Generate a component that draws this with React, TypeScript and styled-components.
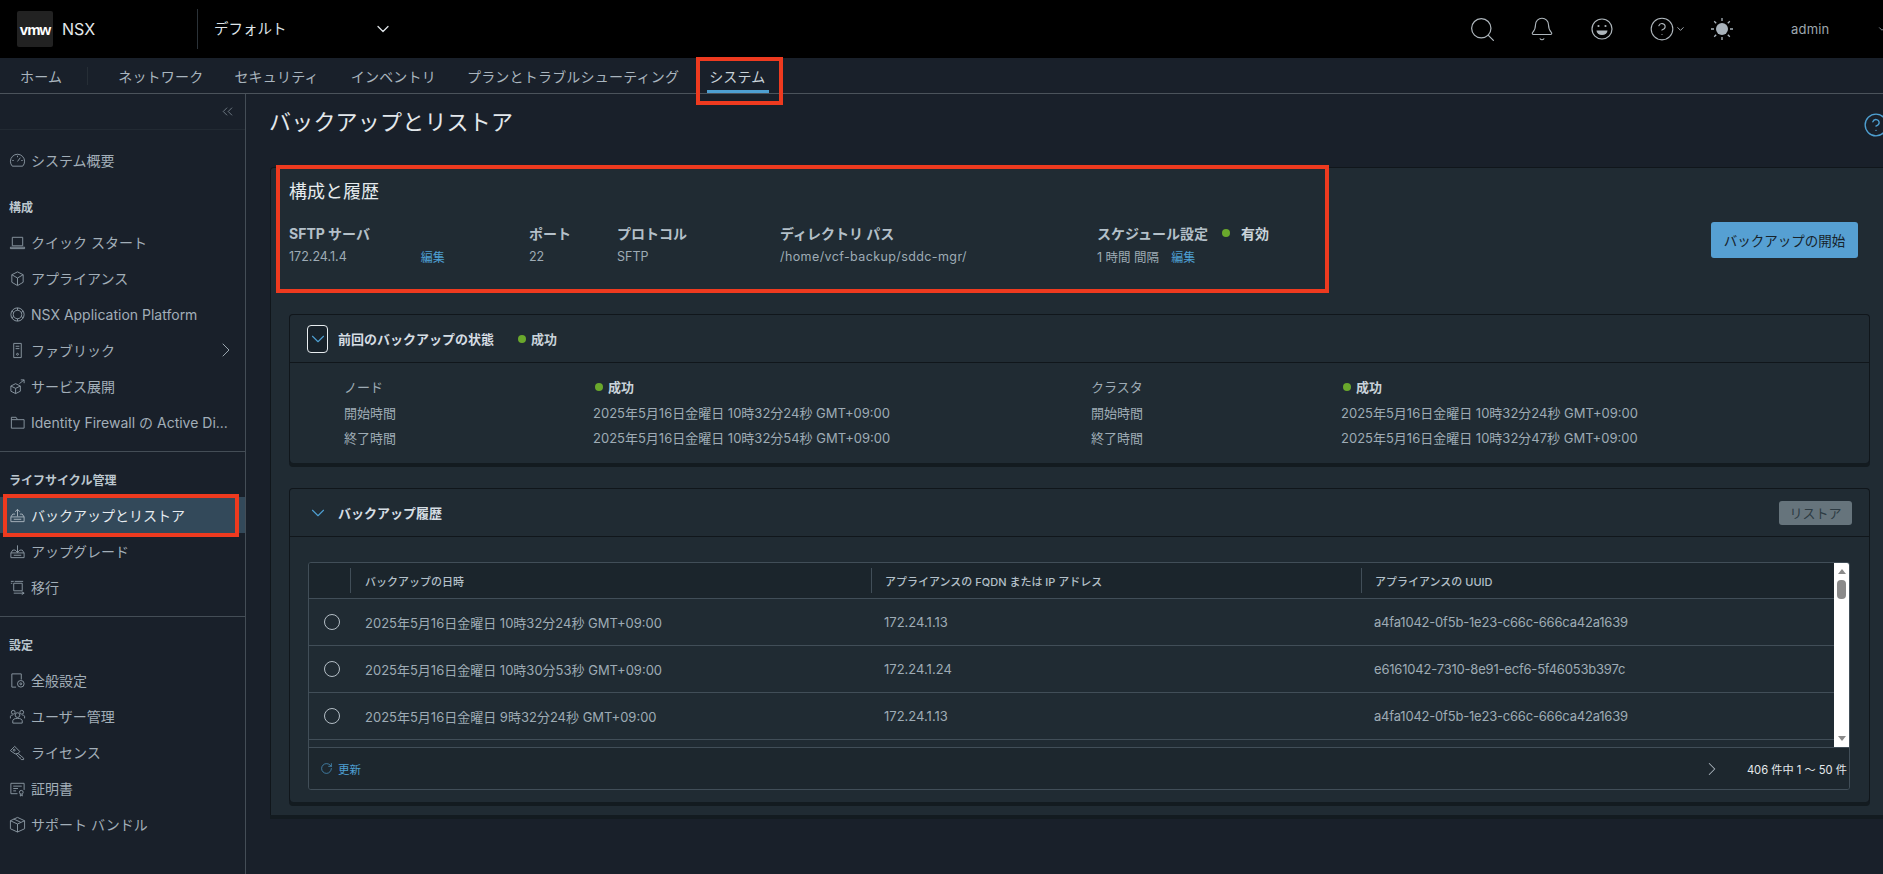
import React from 'react';
import styled, { createGlobalStyle } from 'styled-components';
import { Bell, ChevronDown, ChevronRight, ChevronsLeft, CircleHelp, RotateCw, Search } from 'lucide-react';

const GlobalStyle = createGlobalStyle`
  html, body {
    margin: 0;
    padding: 0;
    height: 100%;
    overflow: hidden;
    background: #19202a;
  }
  body {
    font-family: Inter, "Noto Sans CJK JP", "Noto Sans", sans-serif;
    color: #aab6bf;
  }
  * { box-sizing: border-box; }
`;

const Page = styled.div`
  width: 1883px;
  height: 874px;
  overflow: hidden;
  display: flex;
  flex-direction: column;
  background: #19202a;
`;

/* red marks laid over the screenshot */
const Callout = styled.div<{ $inset: string }>`
  position: absolute;
  inset: ${p => p.$inset};
  border: 4px solid #ee3a1f;
  pointer-events: none;
`;

const TopBar = styled.header`
  height: 58px;
  flex: none;
  background: #000;
  display: flex;
  align-items: center;
  padding-left: 17px;
`;

const LogoBox = styled.div`
  width: 36px;
  height: 36px;
  background: #222;
  border-radius: 2px;
  display: flex;
  align-items: center;
  justify-content: center;
  color: #fff;
  font: 700 15px "Liberation Sans", sans-serif;
  letter-spacing: -1px;
`;

const Product = styled.div`
  margin-left: 9px;
  width: 135px;
  font-size: 16px;
  color: #e4e8eb;
`;

const TopDivider = styled.div`
  width: 1px;
  height: 40px;
  background: #2b3238;
`;

const Scope = styled.div`
  margin-left: 16px;
  width: 179px;
  padding-bottom: 3px;
  display: flex;
  justify-content: space-between;
  align-items: center;
  font-size: 14.5px;
  color: #dfe4e8;
  svg { margin-top: 3px; }
`;

const TopIcons = styled.div`
  margin-left: auto;
  display: flex;
  align-items: center;
  color: #aeb6bc;
`;

const TopIcon = styled.div`
  position: relative;
  width: 60px;
  display: flex;
  align-items: center;
  justify-content: center;
`;

const HelpCaret = styled.div`
  position: absolute;
  left: 43px;
  top: 50%;
  transform: translateY(-50%);
  display: flex;
`;

const UserName = styled.div`
  width: 92px;
  margin-left: 39px;
  display: flex;
  align-items: center;
  font-size: 13px;
  color: #9ea7ae;
  letter-spacing: 0.2px;
  svg { margin-left: 48px; flex: none; }
`;

const NavBar = styled.nav`
  height: 36px;
  flex: none;
  background: #19202a;
  border-bottom: 1px solid #4b535b;
  display: flex;
  align-items: center;
  padding-left: 20px;
  font-size: 14px;
  letter-spacing: 0.2px;
`;

const NavItem = styled.div<{ $gap: number; $active?: boolean }>`
  position: relative;
  height: 100%;
  display: flex;
  align-items: center;
  margin-right: ${p => p.$gap}px;
  color: ${p => (p.$active ? '#c8d2d9' : '#a9b5be')};
  white-space: nowrap;
  ${p =>
    p.$active &&
    `&::after {
      content: '';
      position: absolute;
      left: -2px;
      right: -3px;
      bottom: 0;
      height: 3px;
      background: #4e9fd1;
    }`}
`;

const NavDivider = styled.div`
  width: 1px;
  height: 18px;
  background: #262e36;
  margin-right: 30px;
`;

const Body = styled.div`
  flex: 1;
  display: flex;
  min-height: 0;
`;

const Sidebar = styled.aside`
  width: 246px;
  flex: none;
  border-right: 1px solid #444d56;
  display: flex;
  flex-direction: column;
`;

const CollapseRow = styled.div`
  height: 36px;
  flex: none;
  margin-bottom: 12px;
  border-bottom: 1px solid #222a33;
  display: flex;
  align-items: center;
  justify-content: flex-end;
  padding-right: 9px;
  color: #8e9aa4;
`;

const SideRow = styled.div<{ $selected?: boolean }>`
  position: relative;
  height: 36px;
  flex: none;
  display: flex;
  align-items: center;
  padding-left: 9px;
  gap: 5px;
  font-size: 14px;
  white-space: nowrap;
  color: ${p => (p.$selected ? '#e6ebef' : '#a2aeb8')};
  background: ${p => (p.$selected ? '#33495a' : 'transparent')};
  svg.side { flex: none; color: ${p => (p.$selected ? '#a8b4bd' : '#8a97a1')}; }
`;

const SideHeading = styled.div<{ $top: number }>`
  height: 20px;
  margin-top: ${p => p.$top}px;
  margin-bottom: 8px;
  flex: none;
  display: flex;
  align-items: center;
  padding-left: 9px;
  font-size: 12px;
  font-weight: 700;
  color: #bcc7cf;
`;

const SideDivider = styled.div`
  height: 1px;
  margin-top: 11px;
  flex: none;
  background: #444d56;
`;

const SideArrow = styled.div`
  margin-left: auto;
  margin-right: 7px;
  display: flex;
  color: #9aa6af;
`;

const Main = styled.main`
  flex: 1;
  min-width: 0;
  padding-left: 24px;
`;

const TitleBar = styled.div`
  height: 73px;
  display: flex;
  align-items: flex-start;
  justify-content: space-between;
  padding-top: 12px;
`;

const PageTitle = styled.h1`
  margin: 0 0 0 -1px;
  font-size: 22px;
  line-height: 33px;
  font-weight: 400;
  letter-spacing: 0.2px;
  color: #e3e8ec;
`;

const HelpLink = styled.div`
  margin: 6px -6px 0 0;
  display: flex;
  color: #4e9fd1;
`;

const OuterCard = styled.section`
  height: 648px;
  background: #202b33;
  border-top: 1px solid #10161b;
  border-left: 1px solid #10161b;
  border-top-left-radius: 4px;
  box-shadow: 0 4px 0 #131b20;
  padding: 0 13px 0 18px;
`;

const Summary = styled.div`
  height: 146px;
  display: flex;
  justify-content: space-between;
  align-items: flex-start;
`;

const SummaryInfo = styled.div`
  position: relative;
  width: 1040px;
  height: 124px;
  padding-top: 12px;
`;

const SummaryTitle = styled.h2`
  margin: 0 0 17px;
  font-size: 18px;
  line-height: 24px;
  font-weight: 400;
  color: #e6ebee;
`;

const FieldGrid = styled.div`
  display: grid;
  grid-template-columns: 240px 88px 163px 317px 1fr;
  grid-template-rows: 23px 25px;
  align-items: center;
`;

const FieldLabel = styled.div`
  font-size: 14px;
  font-weight: 700;
  color: #b4c0c9;
  display: flex;
  align-items: center;
  white-space: nowrap;
`;

const FieldValue = styled.div<{ $wide?: boolean }>`
  font-size: 12.5px;
  color: #9eabb5;
  display: flex;
  align-items: center;
  white-space: nowrap;
  letter-spacing: ${p => (p.$wide ? '0.4px' : 'normal')};
`;

const SmallLink = styled.span<{ $left: number }>`
  margin-left: ${p => p.$left}px;
  font-size: 12px;
  color: #4e9fd1;
`;

const StatusDot = styled.span<{ $left?: number; $right?: number }>`
  width: 8px;
  height: 8px;
  border-radius: 50%;
  background: #6aa82c;
  flex: none;
  margin-left: ${p => p.$left ?? 0}px;
  margin-right: ${p => p.$right ?? 0}px;
`;

const StatusText = styled.span<{ $size?: number }>`
  font-size: ${p => p.$size ?? 13}px;
  font-weight: 700;
  color: #c9d3da;
  white-space: nowrap;
`;

const PrimaryButton = styled.button`
  margin: 54px 12px 0 0;
  width: 147px;
  height: 36px;
  border: none;
  border-radius: 3px;
  background: #56a0d3;
  color: #17232b;
  font: inherit;
  font-size: 13.5px;
`;

const InnerCard = styled.div<{ $height: number }>`
  height: ${p => p.$height}px;
  margin-bottom: 25px;
  background: #202b33;
  border: 1px solid #10161b;
  border-bottom: none;
  border-radius: 4px;
  box-shadow: 0 4px 0 #131b20;
`;

const CardHeader = styled.div`
  height: 48px;
  border-bottom: 1px solid #10161b;
  display: flex;
  align-items: center;
  padding-left: 17px;
`;

const Toggle = styled.div<{ $focused?: boolean }>`
  width: 21px;
  height: 28px;
  flex: none;
  display: flex;
  align-items: center;
  justify-content: center;
  color: #4e9fd1;
  border-radius: 4px;
  background: ${p => (p.$focused ? '#18222a' : 'transparent')};
  border: ${p => (p.$focused ? '1px solid #e8edf0' : 'none')};
  svg { flex: none; margin-top: 1px; }
`;

const CardTitle = styled.div`
  margin-left: 10px;
  font-size: 13px;
  font-weight: 700;
  color: #d5dde3;
  white-space: nowrap;
`;

const HeaderStatus = styled.div`
  margin-left: 24px;
  display: flex;
  align-items: center;
`;

const RestoreButton = styled.button`
  margin-left: auto;
  margin-right: 17px;
  width: 73px;
  height: 24px;
  border: none;
  border-radius: 3px;
  background: #66747c;
  color: #2c3a42;
  font: inherit;
  font-size: 13px;
`;

const Details = styled.div`
  display: grid;
  grid-template-columns: 249px 498px 250px 1fr;
  grid-auto-rows: 25.5px;
  padding: 11px 0 0 54px;
  align-items: center;
  font-size: 13px;
  color: #9eabb5;
  white-space: nowrap;
`;

const DetailStatus = styled.div`
  display: flex;
  align-items: center;
`;

const GridFrame = styled.div`
  margin: 25px 19px 0 18px;
  height: 228px;
  border: 1px solid #414e58;
  border-radius: 3px;
  display: flex;
  flex-direction: column;
  overflow: hidden;
`;

const GridBody = styled.div`
  height: 185px;
  flex: none;
  display: flex;
  border-bottom: 1px solid #414e58;
`;

const GridTable = styled.div`
  flex: 1;
  min-width: 0;
`;

const GridRow = styled.div<{ $head?: boolean }>`
  height: ${p => (p.$head ? 36 : 47)}px;
  display: grid;
  grid-template-columns: 41px 521px 490px 1fr;
  align-items: center;
  border-bottom: 1px solid #414e58;
  background: ${p => (p.$head ? '#1b252c' : 'transparent')};
  font-size: ${p => (p.$head ? 11 : 13)}px;
  font-weight: ${p => (p.$head ? 500 : 400)};
  color: ${p => (p.$head ? '#b4c0c9' : '#9eabb5')};
  white-space: nowrap;
`;

const HeadCell = styled.div<{ $pad?: number }>`
  height: 25px;
  display: flex;
  align-items: center;
  padding-left: ${p => p.$pad ?? 13}px;
  border-left: 1px solid #414e58;
`;

const Cell = styled.div<{ $pad?: number; $tight?: boolean }>`
  padding-left: ${p => p.$pad ?? 13}px;
  letter-spacing: ${p => (p.$tight ? '-0.2px' : 'normal')};
`;

const Radio = styled.div`
  width: 16px;
  height: 16px;
  margin-left: 15px;
  border: 1px solid #b4bec6;
  border-radius: 50%;
`;

const Scrollbar = styled.div`
  width: 15px;
  flex: none;
  background: #fff;
  display: flex;
  flex-direction: column;
  align-items: center;
  padding-top: 6px;
`;

const ScrollUp = styled.div`
  width: 0;
  height: 0;
  border-left: 4px solid transparent;
  border-right: 4px solid transparent;
  border-bottom: 5px solid #8a8a8a;
`;

const ScrollThumb = styled.div`
  width: 9px;
  height: 19px;
  margin-top: 6px;
  border-radius: 4px;
  background: #8a8a8a;
`;

const ScrollDown = styled.div`
  width: 0;
  height: 0;
  margin-top: auto;
  margin-bottom: 6px;
  border-left: 4px solid transparent;
  border-right: 4px solid transparent;
  border-top: 5px solid #8a8a8a;
`;

const GridFooter = styled.div`
  flex: 1;
  display: flex;
  align-items: center;
  background: #1d272e;
  padding: 0 2px 0 11px;
`;

const Refresh = styled.div`
  display: flex;
  align-items: center;
  gap: 5px;
  font-size: 11.5px;
  color: #4e9fd1;
`;

const Pager = styled.div`
  margin-left: auto;
  display: flex;
  align-items: center;
  gap: 24px;
  color: #aab5bd;
`;

const PagerText = styled.div`
  font-size: 11.2px;
  color: #e4e9ec;
  white-space: nowrap;
`;

const S = { className: 'side', width: 17, height: 17, viewBox: '0 0 18 18', fill: 'none', stroke: 'currentColor', strokeWidth: 1 };

const sideIcons: Record<string, React.ReactNode> = {
  gauge: (
    <svg {...S}>
      <path d="M3.5 15a7.5 7.5 0 1 1 11 0z" />
      <path d="M9 10l3-4M3.5 9H5M13 9h1.5M9 4v1.5" />
    </svg>
  ),
  laptop: (
    <svg {...S}>
      <path d="M3.5 3.5h11v9h-11zM1.5 15.5h15v-1.5h-15z" />
    </svg>
  ),
  box: (
    <svg {...S}>
      <path d="M9 2l6 3v8l-6 3.500-6-3.500V5zM3 5l6 3.500L15 5M9 8.500V16" />
    </svg>
  ),
  ring: (
    <svg {...S}>
      <circle cx="9" cy="9" r="7" />
      <circle cx="9" cy="9" r="4.500" />
      <path d="M9 2v2.500M9 13.500V16M2.900 5.500l2.200 1.300M12.900 11.200l2.200 1.300M15.100 5.500l-2.200 1.300M5.100 11.200l-2.200 1.300" />
    </svg>
  ),
  server: (
    <svg {...S}>
      <path d="M5 1.500h8v15H5zM7 4.500h4M7 7h4" />
      <circle cx="9" cy="13" r="1" />
    </svg>
  ),
  deploy: (
    <svg {...S}>
      <path d="M7 6l5 2.500v5.500l-5 2.500-5-2.500V8.500zM2 8.500L7 11l5-2.500M7 11v5.500M11 6l5-4M12.500 2H16v3.500" />
    </svg>
  ),
  folder: (
    <svg {...S}>
      <path d="M2.500 15V3.500h5l1.500 2.500h7V15z M2.500 6H9" />
    </svg>
  ),
  backup: (
    <svg {...S}>
      <path d="M2 10.500h14v5H2zM2 10.500L4 7.500h2.500M16 10.500l-2-3h-2.500M9 10V2.500M6.500 5L9 2.500 11.500 5M5 13h8" />
    </svg>
  ),
  upgrade: (
    <svg {...S}>
      <path d="M2 10.500h14v5H2zM2 10.500L4 7.500h2.500M16 10.500l-2-3h-2.500M9 2.500V10M6.500 7.500L9 10l2.500-2.500M5 13h8" />
    </svg>
  ),
  move: (
    <svg {...S}>
      <path d="M5 4.500h9v8H5zM2 2.500h3M2 4.500h1.500M5 15h11M13.500 13.500L16 15l-2.500 1.500M6 2.500h9" />
    </svg>
  ),
  settings: (
    <svg {...S}>
      <path d="M7.500 16H3V2h10v6" />
      <circle cx="12.500" cy="12.500" r="3.500" />
      <circle cx="12.500" cy="12.500" r="1" />
    </svg>
  ),
  users: (
    <svg {...S}>
      <circle cx="9" cy="7.500" r="2.500" />
      <circle cx="4.500" cy="4.500" r="2" />
      <circle cx="13.500" cy="4.500" r="2" />
      <path d="M4 16v-2.500c0-1.500 2-2.500 5-2.500s5 1 5 2.500V16zM1.500 11V9c0-1 1-1.500 2.500-1.500M16.500 11V9c0-1-1-1.500-2.500-1.500" />
    </svg>
  ),
  key: (
    <svg {...S}>
      <path d="M1.500 7L6 2.500 11.500 8l-2 2 -3 .5zM9.500 10l6 5v1.500h-2.500l-1-1v-1h-1l-3.500-4" />
      <circle cx="5.500" cy="6.500" r="1" />
    </svg>
  ),
  cert: (
    <svg {...S}>
      <path d="M9 14.500H2v-11h14v7M4.500 6.500h9M4.500 9h5M4.500 11.500h3" />
      <circle cx="13" cy="13" r="2" />
      <path d="M12 15v2l1-.7 1 .7v-2" />
    </svg>
  ),
  bundle: (
    <svg {...S}>
      <path d="M9 1.500l7.500 3.500v8.500L9 17l-7.500-3.500V5zM1.500 5L9 8.500 16.500 5M9 8.500V17M5 3.200l7.500 3.500" />
    </svg>
  ),
};

const Face = () => (
  <svg width="22" height="22" viewBox="0 0 22 22" fill="none" stroke="currentColor" strokeWidth="1.200">
    <circle cx="11" cy="11" r="10" />
    <circle cx="7.500" cy="8" r="1.100" fill="currentColor" stroke="none" />
    <circle cx="14.500" cy="8" r="1.100" fill="currentColor" stroke="none" />
    <path d="M5.500 12.500h11a5.500 4.500 0 0 1-11 0z" fill="currentColor" stroke="none" />
  </svg>
);

const Sun = () => (
  <svg width="24" height="24" viewBox="0 0 24 24" fill="none" stroke="#a8b2bb" strokeWidth="1.300">
    <circle cx="12" cy="12" r="6" fill="#a8b2bb" stroke="none" />
    <path d="M12 1v3M12 20v3M1 12h3M20 12h3M4.200 4.200l2 2M17.800 17.800l2 2M19.800 4.200l-2 2M6.200 17.800l-2 2" />
  </svg>
);

const rows = [
  ['2025年5月16日金曜日 10時32分24秒 GMT+09:00', '172.24.1.13', 'a4fa1042-0f5b-1e23-c66c-666ca42a1639'],
  ['2025年5月16日金曜日 10時30分53秒 GMT+09:00', '172.24.1.24', 'e6161042-7310-8e91-ecf6-5f46053b397c'],
  ['2025年5月16日金曜日 9時32分24秒 GMT+09:00', '172.24.1.13', 'a4fa1042-0f5b-1e23-c66c-666ca42a1639'],
];

const SideItem = ({ icon, label, arrow }: { icon: string; label: string; arrow?: boolean }) => (
  <SideRow>
    {sideIcons[icon]}
    <span>{label}</span>
    {arrow && (
      <SideArrow>
        <ChevronRight size={24} strokeWidth={1} />
      </SideArrow>
    )}
  </SideRow>
);

export default function App() {
  return (
    <Page>
      <GlobalStyle />
      <TopBar>
        <LogoBox>vmw</LogoBox>
        <Product>NSX</Product>
        <TopDivider />
        <Scope>
          デフォルト
          <ChevronDown size={20} strokeWidth={1.5} />
        </Scope>
        <TopIcons>
          <TopIcon>
            <Search size={29} strokeWidth={1} />
          </TopIcon>
          <TopIcon>
            <Bell size={26} strokeWidth={1} />
          </TopIcon>
          <TopIcon>
            <Face />
          </TopIcon>
          <TopIcon>
            <CircleHelp size={26} strokeWidth={1} />
            <HelpCaret>
              <ChevronDown size={11} />
            </HelpCaret>
          </TopIcon>
          <TopIcon>
            <Sun />
          </TopIcon>
          <UserName>
            admin
            <ChevronDown size={10} />
          </UserName>
        </TopIcons>
      </TopBar>

      <NavBar>
        <NavItem $gap={25}>ホーム</NavItem>
        <NavDivider />
        <NavItem $gap={31}>ネットワーク</NavItem>
        <NavItem $gap={32}>セキュリティ</NavItem>
        <NavItem $gap={31}>インベントリ</NavItem>
        <NavItem $gap={30}>プランとトラブルシューティング</NavItem>
        <NavItem $gap={0} $active>
          システム
          <Callout $inset="-1px -17px -12px -13px" />
        </NavItem>
      </NavBar>

      <Body>
        <Sidebar>
          <CollapseRow>
            <ChevronsLeft size={17} strokeWidth={1} />
          </CollapseRow>
          <SideItem icon="gauge" label="システム概要" />
          <SideHeading $top={18}>構成</SideHeading>
          <SideItem icon="laptop" label="クイック スタート" />
          <SideItem icon="box" label="アプライアンス" />
          <SideItem icon="ring" label="NSX Application Platform" />
          <SideItem icon="server" label="ファブリック" arrow />
          <SideItem icon="deploy" label="サービス展開" />
          <SideItem icon="folder" label="Identity Firewall の Active Di..." />
          <SideDivider />
          <SideHeading $top={17}>ライフサイクル管理</SideHeading>
          <SideRow $selected>
            {sideIcons.backup}
            <span>バックアップとリストア</span>
            <Callout $inset="-3px 6px -4px 3px" />
          </SideRow>
          <SideItem icon="upgrade" label="アップグレード" />
          <SideItem icon="move" label="移行" />
          <SideDivider />
          <SideHeading $top={17}>設定</SideHeading>
          <SideItem icon="settings" label="全般設定" />
          <SideItem icon="users" label="ユーザー管理" />
          <SideItem icon="key" label="ライセンス" />
          <SideItem icon="cert" label="証明書" />
          <SideItem icon="bundle" label="サポート バンドル" />
        </Sidebar>

        <Main>
          <TitleBar>
            <PageTitle>バックアップとリストア</PageTitle>
            <HelpLink>
              <CircleHelp size={26} strokeWidth={1.25} />
            </HelpLink>
          </TitleBar>

          <OuterCard>
            <Summary>
              <SummaryInfo>
                <SummaryTitle>構成と履歴</SummaryTitle>
                <FieldGrid>
                  <FieldLabel>SFTP サーバ</FieldLabel>
                  <FieldLabel>ポート</FieldLabel>
                  <FieldLabel>プロトコル</FieldLabel>
                  <FieldLabel>ディレクトリ パス</FieldLabel>
                  <FieldLabel>
                    スケジュール設定
                    <StatusDot $left={14} $right={11} />
                    <StatusText $size={14}>有効</StatusText>
                  </FieldLabel>
                  <FieldValue>
                    172.24.1.4
                    <SmallLink $left={74}>編集</SmallLink>
                  </FieldValue>
                  <FieldValue>22</FieldValue>
                  <FieldValue>SFTP</FieldValue>
                  <FieldValue $wide>/home/vcf-backup/sddc-mgr/</FieldValue>
                  <FieldValue>
                    1 時間 間隔
                    <SmallLink $left={12}>編集</SmallLink>
                  </FieldValue>
                </FieldGrid>
                <Callout $inset="-3px 0 -1px -13px" />
              </SummaryInfo>
              <PrimaryButton>バックアップの開始</PrimaryButton>
            </Summary>

            <InnerCard $height={149}>
              <CardHeader>
                <Toggle $focused>
                  <ChevronDown size={22} strokeWidth={1.2} />
                </Toggle>
                <CardTitle>前回のバックアップの状態</CardTitle>
                <HeaderStatus>
                  <StatusDot $right={5} />
                  <StatusText>成功</StatusText>
                </HeaderStatus>
              </CardHeader>
              <Details>
                <span>ノード</span>
                <DetailStatus>
                  <StatusDot $left={2} $right={5} />
                  <StatusText>成功</StatusText>
                </DetailStatus>
                <span>クラスタ</span>
                <DetailStatus>
                  <StatusDot $left={2} $right={5} />
                  <StatusText>成功</StatusText>
                </DetailStatus>
                <span>開始時間</span>
                <span>2025年5月16日金曜日 10時32分24秒 GMT+09:00</span>
                <span>開始時間</span>
                <span>2025年5月16日金曜日 10時32分24秒 GMT+09:00</span>
                <span>終了時間</span>
                <span>2025年5月16日金曜日 10時32分54秒 GMT+09:00</span>
                <span>終了時間</span>
                <span>2025年5月16日金曜日 10時32分47秒 GMT+09:00</span>
              </Details>
            </InnerCard>

            <InnerCard $height={314}>
              <CardHeader>
                <Toggle>
                  <ChevronDown size={22} strokeWidth={1.2} />
                </Toggle>
                <CardTitle>バックアップ履歴</CardTitle>
                <RestoreButton>リストア</RestoreButton>
              </CardHeader>
              <GridFrame>
                <GridBody>
                  <GridTable>
                    <GridRow $head>
                      <span />
                      <HeadCell $pad={14}>バックアップの日時</HeadCell>
                      <HeadCell>アプライアンスの FQDN または IP アドレス</HeadCell>
                      <HeadCell>アプライアンスの UUID</HeadCell>
                    </GridRow>
                    {rows.map(r => (
                      <GridRow key={r[0]}>
                        <Radio />
                        <Cell $pad={15}>{r[0]}</Cell>
                        <Cell>{r[1]}</Cell>
                        <Cell $tight>{r[2]}</Cell>
                      </GridRow>
                    ))}
                  </GridTable>
                  <Scrollbar>
                    <ScrollUp />
                    <ScrollThumb />
                    <ScrollDown />
                  </Scrollbar>
                </GridBody>
                <GridFooter>
                  <Refresh>
                    <RotateCw size={13} strokeWidth={1.25} />
                    更新
                  </Refresh>
                  <Pager>
                    <ChevronRight size={22} strokeWidth={1.1} />
                    <PagerText>406 件中 1 〜 50 件</PagerText>
                  </Pager>
                </GridFooter>
              </GridFrame>
            </InnerCard>
          </OuterCard>
        </Main>
      </Body>
    </Page>
  );
}
